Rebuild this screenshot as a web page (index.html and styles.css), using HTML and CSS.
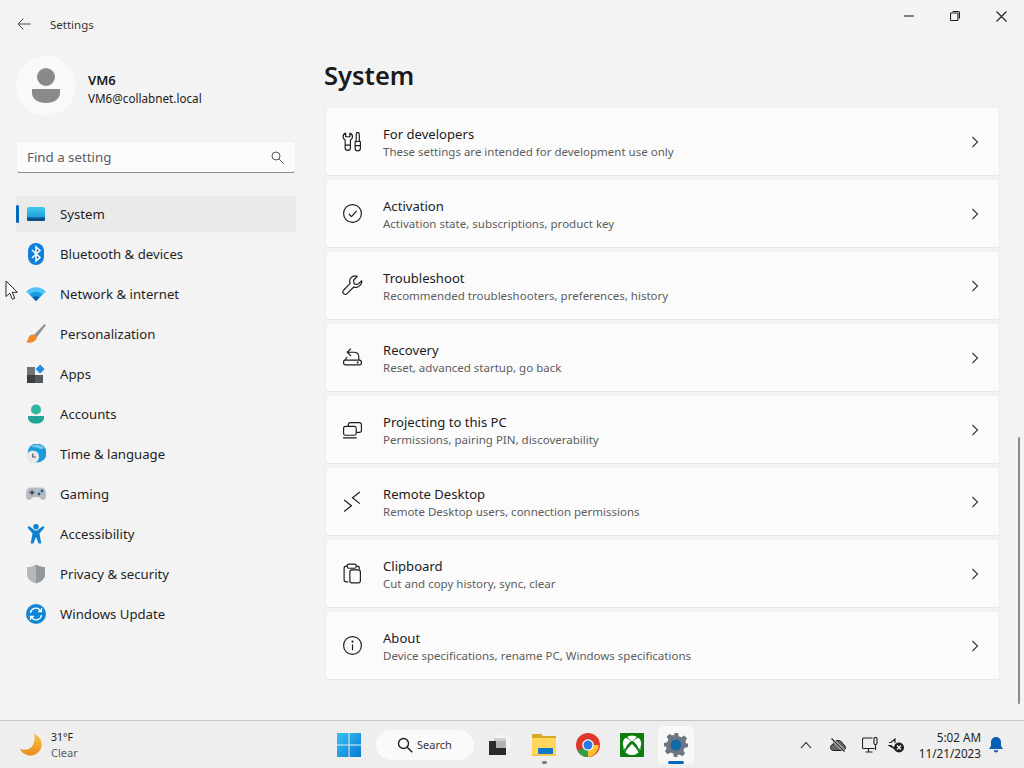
FILE: index.html
```html
<!DOCTYPE html>
<html lang="en">
<head>
<meta charset="utf-8">
<title>Settings</title>
<link rel="stylesheet" href="styles.css">
</head>
<body>
<div class="window">
  <aside class="sidebar">
    <div class="titlebar">
      <svg class="back" width="16" height="16" viewBox="0 0 16 16"><path class="back-line" d="M14.500 8H2M7.500 2.500 2 8l5.500 5.500"/></svg>
      <span class="app-title">Settings</span>
    </div>
    <div class="user">
      <div class="avatar">
        <svg width="30" height="36" viewBox="0 0 30 36"><circle cx="15" cy="9" r="9" fill="#8a8a8a"/><path d="M1 21h28v4c0 6-6 10-14 10S1 31 1 25z" fill="#8a8a8a"/></svg>
      </div>
      <div class="user-text">
        <div class="user-name">VM6</div>
        <div class="user-mail">VM6@collabnet.local</div>
      </div>
    </div>
    <div class="search">
      <span>Find a setting</span>
      <svg width="13" height="13" viewBox="0 0 13 13"><circle class="soft" cx="5" cy="5" r="4"/><path class="soft" d="m8 8 4.500 4.500"/></svg>
    </div>
    <nav class="nav">
      <div class="nav-item active">
        <svg class="nav-icon" viewBox="0 0 20 20"><defs><linearGradient id="sys" x1="0" y1="0" x2="0" y2="1"><stop offset="0" stop-color="#45c8ef"/><stop offset="1" stop-color="#0e93d2"/></linearGradient></defs><rect x="1" y="3" width="18" height="14" rx="1.600" fill="url(#sys)"/><path d="M1 13.500h18v2A1.600 1.600 0 0 1 17.400 17H2.600A1.600 1.600 0 0 1 1 15.500z" fill="#0a4f85"/></svg>
        <span>System</span>
      </div>
      <div class="nav-item">
        <svg class="nav-icon tall" viewBox="0 0 20 24"><rect x="2" y="1" width="16" height="22" rx="8" fill="#0f7fdc"/><path d="m6 8 8 7.500L10 19V5l4 3.500L6 16" fill="none" stroke="#fff" stroke-width="1.500"/></svg>
        <span>Bluetooth &amp; devices</span>
      </div>
      <div class="nav-item">
        <svg class="nav-icon" viewBox="0 0 20 20"><path d="M0 7.500Q10-1 20 7.500L10 17z" fill="#4fc3f7"/><path d="M3.500 10.500Q10 5 16.500 10.500L10 17z" fill="#1a9be0"/><path d="M6.500 13.500Q10 10.500 13.500 13.500L10 17z" fill="#0b5ea8"/></svg>
        <span>Network &amp; internet</span>
      </div>
      <div class="nav-item">
        <svg class="nav-icon" viewBox="0 0 20 20"><path d="M18.500 0 20 1 11 13 8 11z" fill="#8b8f94"/><path d="M8 10.500c-3-.5-5 1-5.500 3.500-.4 2-1.200 3-2.500 4 4 1.500 10 .5 11-5z" fill="#ef8a26"/></svg>
        <span>Personalization</span>
      </div>
      <div class="nav-item">
        <svg class="nav-icon" viewBox="0 0 20 20"><rect x="1" y="3" width="8" height="8" fill="#6f7276"/><rect x="1" y="11" width="8" height="8" fill="#3c3f43"/><rect x="9" y="11" width="8" height="8" fill="#55585c"/><rect x="10.800" y="1.800" width="6.600" height="6.600" rx="1" transform="rotate(45 14.100 5.100)" fill="#1f8fe3"/></svg>
        <span>Apps</span>
      </div>
      <div class="nav-item">
        <svg class="nav-icon" viewBox="0 0 20 20"><circle cx="10" cy="5.500" r="5" fill="#2fb5a0"/><path d="M2 12h16v2c0 3.500-3.500 5.500-8 5.500S2 17.500 2 14z" fill="#22a594"/></svg>
        <span>Accounts</span>
      </div>
      <div class="nav-item">
        <svg class="nav-icon" viewBox="0 0 20 20"><circle cx="11" cy="9" r="9.500" fill="#1c9bd8"/><path d="M5 2.500C9 0 15 0 18 4c-2 1.500-4 1-6 0S7 4 5 2.500z" fill="#78cbe8"/><circle cx="6.800" cy="12.800" r="6.300" fill="#e6e8ec"/><path d="M6.800 9.500v3.500h3" fill="none" stroke="#505356" stroke-width="1.200"/></svg>
        <span>Time &amp; language</span>
      </div>
      <div class="nav-item">
        <svg class="nav-icon" viewBox="0 0 20 20"><path d="M4.500 3.500h11c3 0 4.500 3 4.500 7s-1 5.500-3 5.500-3-3-5-3H8c-2 0-3 3-5 3s-3-1.500-3-5.500 1.500-7 4.500-7z" fill="#b6bbc2"/><path d="M3.500 8.500h5M6 6v5" stroke="#3d4146" stroke-width="1.300"/><circle cx="13" cy="10" r="1.400" fill="#1763a8"/><circle cx="16" cy="7" r="1.400" fill="#1763a8"/></svg>
        <span>Gaming</span>
      </div>
      <div class="nav-item">
        <svg class="nav-icon" viewBox="0 0 20 20"><circle cx="10" cy="2.800" r="2.700" fill="#0f80d2"/><path d="M1.500 3.500 3 2l6 4.500h2L17 2l1.500 1.500-5 6 1.800 10h-2.700L10 13l-2.600 6.500H4.700l1.800-10z" fill="#0f80d2"/></svg>
        <span>Accessibility</span>
      </div>
      <div class="nav-item">
        <svg class="nav-icon" viewBox="0 0 20 20"><path d="M10 .5c3 2 6 2.500 9 2.500v7c0 5-4 8-9 9.500C5 18 1 15 1 10V3c3 0 6-.5 9-2.500z" fill="#b4b8bb"/><path d="M10 .5c3 2 6 2.500 9 2.500v7c0 5-4 8-9 9.500z" fill="#94989c"/></svg>
        <span>Privacy &amp; security</span>
      </div>
      <div class="nav-item">
        <svg class="nav-icon" viewBox="0 0 20 20"><circle cx="10" cy="10" r="10" fill="#0f86d6"/><path d="M4.500 9A5.500 5.500 0 0 1 14 6l1.500 1.500M15.500 4v3.500H12M15.500 11A5.500 5.500 0 0 1 6 14l-1.500-1.500M4.500 16v-3.500H8" fill="none" stroke="#fff" stroke-width="1.300"/></svg>
        <span>Windows Update</span>
      </div>
    </nav>
  </aside>
  <main class="main">
    <div class="controls">
      <div class="ctl"><svg width="10" height="10" viewBox="0 0 10 10"><path class="thin" d="M0 5h10"/></svg></div>
      <div class="ctl"><svg width="10" height="10" viewBox="0 0 10 10"><rect class="thin" x=".5" y="2" width="7.500" height="7.500" rx="1"/><path class="thin" d="M2.500.5h5.500a1.500 1.500 0 0 1 1.500 1.500v5.500"/></svg></div>
      <div class="ctl"><svg width="11" height="11" viewBox="0 0 11 11"><path class="thin" d="m.5.5 10 10M10.500.5l-10 10"/></svg></div>
    </div>
    <h1 class="heading">System</h1>
    <div class="cards">
      <div class="card">
        <svg class="card-icon" viewBox="0 0 20 20"><path class="line" d="M3.500 2C2 2.500 1 4 1 5.500c0 1.500 1 2.500 2 3V16a2.500 2.500 0 0 0 5 0V8.500c1-.5 2-1.500 2-3C10 4 9 2.500 7.500 2v3.500h-4zM3 13.500h5"/><path class="line" d="M14 1.500h2l.5 2.500v6h-3V4zM12.500 10h5v6.500a2.500 2.500 0 0 1-5 0zM12.500 14h5"/></svg>
        <div class="card-text"><div class="card-title">For developers</div><div class="card-sub">These settings are intended for development use only</div></div>
        <svg class="chev" viewBox="0 0 12 12"><path class="chev-line" d="m3.500 1 5 5-5 5"/></svg>
      </div>
      <div class="card">
        <svg class="card-icon" viewBox="0 0 20 20"><circle class="line" cx="10" cy="10" r="8.500"/><path class="line" d="m6.500 10.500 2.500 2.500 5-5.500"/></svg>
        <div class="card-text"><div class="card-title">Activation</div><div class="card-sub">Activation state, subscriptions, product key</div></div>
        <svg class="chev" viewBox="0 0 12 12"><path class="chev-line" d="m3.500 1 5 5-5 5"/></svg>
      </div>
      <div class="card">
        <svg class="card-icon" viewBox="0 0 20 20"><path class="line" d="M18.800 5.500 15 9l-3.500-.5L11 5l3.500-3.800C12.500.5 10 1 8.700 2.500 7.300 4 7 6 7.800 8L1.500 14.500c-.8 1-.8 2.500 0 3.200 1 1 2.400 1 3.300 0L11.200 11.400c2 .8 4 .5 5.500-1 1.500-1.400 2.500-3 2.100-4.900z"/></svg>
        <div class="card-text"><div class="card-title">Troubleshoot</div><div class="card-sub">Recommended troubleshooters, preferences, history</div></div>
        <svg class="chev" viewBox="0 0 12 12"><path class="chev-line" d="m3.500 1 5 5-5 5"/></svg>
      </div>
      <div class="card">
        <svg class="card-icon" viewBox="0 0 20 20"><path class="line" d="M6 5h6a4.500 4.500 0 0 1 4 4.500V12M8.500 1.500 5 5l3.500 3.500M5 9.500c-1 .5-1.500 2-2 3M2.500 12.500h14a2 2 0 0 1 2 2v.5a2 2 0 0 1-2 2h-13a2 2 0 0 1-2-2v-.5a2 2 0 0 1 1-2z"/><circle cx="15" cy="14.800" r=".9" fill="#1b1b1b"/></svg>
        <div class="card-text"><div class="card-title">Recovery</div><div class="card-sub">Reset, advanced startup, go back</div></div>
        <svg class="chev" viewBox="0 0 12 12"><path class="chev-line" d="m3.500 1 5 5-5 5"/></svg>
      </div>
      <div class="card">
        <svg class="card-icon" viewBox="0 0 20 20"><rect class="line" x="1.500" y="7" width="12" height="8.500" rx="1.800"/><path class="line" d="M6 7V5.500A1.800 1.800 0 0 1 7.800 3.500h8.900A1.800 1.800 0 0 1 18.500 5.500v5.500a1.800 1.800 0 0 1-1.800 1.800h-3.200M1 18h13"/></svg>
        <div class="card-text"><div class="card-title">Projecting to this PC</div><div class="card-sub">Permissions, pairing PIN, discoverability</div></div>
        <svg class="chev" viewBox="0 0 12 12"><path class="chev-line" d="m3.500 1 5 5-5 5"/></svg>
      </div>
      <div class="card">
        <svg class="card-icon" viewBox="0 0 20 20"><path class="line" d="m2 8.500 7 5.500-7 5.500M17 1l-7 5.500 7 5.500"/></svg>
        <div class="card-text"><div class="card-title">Remote Desktop</div><div class="card-sub">Remote Desktop users, connection permissions</div></div>
        <svg class="chev" viewBox="0 0 12 12"><path class="chev-line" d="m3.500 1 5 5-5 5"/></svg>
      </div>
      <div class="card">
        <svg class="card-icon" viewBox="0 0 20 20"><path class="line" d="M5 3H4a2 2 0 0 0-2 2v11a2 2 0 0 0 2 2h2M13.500 3h1a2 2 0 0 1 2 2v1"/><rect class="line" x="5" y="1" width="8.500" height="4" rx="1.500"/><rect class="line" x="7.500" y="6.500" width="10" height="12.500" rx="2"/></svg>
        <div class="card-text"><div class="card-title">Clipboard</div><div class="card-sub">Cut and copy history, sync, clear</div></div>
        <svg class="chev" viewBox="0 0 12 12"><path class="chev-line" d="m3.500 1 5 5-5 5"/></svg>
      </div>
      <div class="card">
        <svg class="card-icon" viewBox="0 0 20 20"><circle class="line" cx="10" cy="10" r="8.500"/><path class="line" d="M10 9v5.500"/><circle cx="10" cy="6.300" r="1" fill="#1b1b1b"/></svg>
        <div class="card-text"><div class="card-title">About</div><div class="card-sub">Device specifications, rename PC, Windows specifications</div></div>
        <svg class="chev" viewBox="0 0 12 12"><path class="chev-line" d="m3.500 1 5 5-5 5"/></svg>
      </div>
    </div>
  </main>
  <div class="scrollbar"></div>
  <svg class="cursor" width="14" height="21" viewBox="0 0 14 21"><path d="M1 1v15.500l3.800-3.300 2.600 6 2.400-1-2.600-5.900h5.200z" fill="#fff" stroke="#222" stroke-width="1"/></svg>
</div>
<footer class="taskbar">
  <div class="weather">
    <svg width="24" height="24" viewBox="0 0 24 24"><defs><linearGradient id="moon" x1="0" y1="0" x2="0" y2="1"><stop offset="0" stop-color="#f5c242"/><stop offset="1" stop-color="#ec8a1e"/></linearGradient></defs><path d="M15 1c6 2 9 8 7 14-2 6-9 9-14 7-3-1-6-3-7-6 6 2 11 0 13-4 2-4 2-8 1-11z" fill="url(#moon)"/></svg>
    <div class="weather-text"><div class="temp">31°F</div><div class="cond">Clear</div></div>
  </div>
  <div class="center">
    <div class="tile win">
      <svg width="24" height="24" viewBox="0 0 24 24"><defs><linearGradient id="win" x1="0" y1="0" x2="1" y2="1"><stop offset="0" stop-color="#35c3f2"/><stop offset="1" stop-color="#0b78d4"/></linearGradient></defs><path d="M0 0h11.500v11.500H0zM12.500 0H24v11.500H12.500zM0 12.500h11.500V24H0zM12.500 12.500H24V24H12.500z" fill="url(#win)"/></svg>
    </div>
    <div class="pill">
      <svg width="16" height="16" viewBox="0 0 16 16"><circle cx="6.500" cy="6.500" r="5" fill="none" stroke="#1f1f1f" stroke-width="1.400"/><path d="m10.200 10.200 5 5" stroke="#1f1f1f" stroke-width="1.500"/></svg>
      <span>Search</span>
    </div>
    <div class="tile task">
      <svg width="24" height="22" viewBox="0 0 24 22"><rect x="9" y="1" width="14" height="14" fill="#f4f4f4"/><rect x="7" y="4" width="12" height="12" fill="#d0d0d0"/><rect x="2" y="7" width="17" height="14" fill="#2b2b2b"/><rect x="9" y="7" width="10" height="7" fill="#b3b3b3"/></svg>
    </div>
    <div class="tile">
      <svg width="24" height="24" viewBox="0 0 24 24"><path d="M0 1h9l2 2h13v4H0z" fill="#d9a825"/><path d="M0 5h24v18H0z" fill="#ffd75e"/><rect x="6" y="15" width="15" height="6" rx="1" fill="#0f78c8"/><rect x="0" y="21" width="24" height="2" fill="#f5c94c"/></svg>
      <span class="dot"></span>
    </div>
    <div class="tile">
      <svg width="24" height="24" viewBox="0 0 24 24"><circle cx="12" cy="12" r="12" fill="#e0372b"/><path d="M12 12 1.600 18a12 12 0 0 0 10.400 6l6-10z" fill="#2f9e44"/><path d="M12 12h10.800A12 12 0 0 1 12 24z" fill="#fbc02d"/><circle cx="12" cy="12" r="5.800" fill="#fff"/><circle cx="12" cy="12" r="4.500" fill="#2a78e4"/></svg>
    </div>
    <div class="tile">
      <svg width="24" height="24" viewBox="0 0 24 24"><rect width="24" height="24" rx="1" fill="#107c10"/><circle cx="12" cy="12" r="9.500" fill="#fff"/><path d="M5 2 12 8.500 19 2l3 10-3.500 8L12 13.500 5.500 20 2 12z" fill="#107c10"/><path d="M12 11c2 2 6 6 6.500 8.500a9.500 9.500 0 0 1-13 0C6 17 10 13 12 11zM5 5c2 0 4 1 6 3-3 2.500-5 5.500-6 8.500A9.500 9.500 0 0 1 5 5zM19 5c-2 0-4 1-6 3 3 2.500 5 5.500 6 8.500A9.500 9.500 0 0 0 19 5z" fill="#fff"/></svg>
    </div>
    <div class="tile current">
      <svg width="24" height="24" viewBox="0 0 24 24"><path d="M10 0h4l.8 3.200 2.700 1.100 2.800-1.700 2.800 2.800-1.700 2.800 1.100 2.700L24 10v4l-3.500.9-1.100 2.700 1.700 2.800-2.800 2.800-2.800-1.700-2.700 1.100L14 24h-4l-.8-3.400-2.700-1.100-2.800 1.700-2.800-2.800 1.700-2.800-1.100-2.700L0 14v-4l3.200-.8 1.100-2.700-1.700-2.800 2.800-2.800 2.800 1.700 2.700-1.100z" fill="#6d7681"/><circle cx="12" cy="12" r="5.500" fill="#1568a8"/></svg>
      <span class="indicator"></span>
    </div>
  </div>
  <div class="tray">
    <svg class="t-chev" width="12" height="8" viewBox="0 0 12 8"><path class="thin" d="m1 7 5-5.500L11 7"/></svg>
    <svg class="t-cloud" width="16" height="14" viewBox="0 0 16 14"><path d="M3.500 12.500C1.500 12.500.5 11 .5 9.500S1.500 6.500 3 6.500C3.500 4 5.500 2.500 8 2.500s4.500 1.500 5 4c1.500 0 2.500 1.500 2.500 3s-1 3-3 3z" fill="#666" stroke="#1b1b1b"/><path d="m2 1 12 12" stroke="#eee" stroke-width="2.500"/><path d="m1.500 .5 13 13" stroke="#1b1b1b" stroke-width="1.100"/></svg>
    <svg class="t-net" width="16" height="16" viewBox="0 0 16 16"><path class="thin" d="M10.500 1H1.500a1 1 0 0 0-1 1v8.500a1 1 0 0 0 1 1h11M6.500 11.500V15M3.500 15h7"/><rect class="thin" x="12" y=".5" width="3" height="7" rx="1.200"/><path class="thin" d="M13.500 8v5"/></svg>
    <svg class="t-spk" width="16" height="16" viewBox="0 0 16 16"><path class="thin" d="M1 5.500h2L7 2v4M7 12 3 8.500H1z"/><circle cx="11" cy="10.500" r="5" fill="#1f1f1f"/><path d="m9 8.500 4 4m0-4-4 4" stroke="#fff" stroke-width="1.200"/></svg>
    <div class="clock"><div>5:02 AM</div><div>11/21/2023</div></div>
    <svg class="bell" width="16" height="16" viewBox="0 0 16 16"><path d="M8 0c3 0 5 2.300 5 5.300v3.500L15 12H1l2-3.200V5.300C3 2.300 5 0 8 0zM5.800 13.200h4.400a2.200 2.200 0 0 1-4.400 0z" fill="#0a5fb4"/></svg>
  </div>
</footer>
</body>
</html>
```
FILE: styles.css
```css
* { box-sizing: border-box; }
html, body { margin: 0; padding: 0; }
body {
  width: 1024px;
  height: 768px;
  overflow: hidden;
  display: flex;
  flex-direction: column;
  background: #f3f3f3;
  font-family: "Noto Sans", "Open Sans", sans-serif;
  color: #1b1b1b;
}
svg { display: block; flex: none; }
.line { fill: none; stroke: #1b1b1b; stroke-width: 1.100; stroke-linejoin: round; }
.thin { fill: none; stroke: #1f1f1f; stroke-width: 1.100; }
.soft { fill: none; stroke: #5a5a5a; stroke-width: 1; }
.back-line { fill: none; stroke: #4a4a4a; stroke-width: 1; }

.window { position: relative; flex: 1; display: flex; min-height: 0; }
.sidebar { width: 325px; flex: none; padding-left: 16px; }
.titlebar { display: flex; align-items: center; height: 48px; }
.app-title { margin-left: 18px; font-size: 11.500px; color: #333; }
.user { display: flex; align-items: center; height: 60px; margin-top: 8px; gap: 12px; }
.avatar {
  width: 60px; height: 60px; border-radius: 50%;
  background: #f9f9f9;
  display: flex; align-items: center; justify-content: center;
}
.user-text { padding-top: 6px; }
.user-name { font-size: 13px; font-weight: 600; line-height: 18px; }
.user-mail { font-size: 11.700px; line-height: 18px; }
.search {
  width: 280px; height: 32px; margin-top: 25px;
  display: flex; align-items: center; justify-content: space-between;
  padding: 0 11px 0 10px;
  background: #fbfbfb;
  border: 1px solid #efefef;
  border-bottom-color: #8c8c8c;
  border-radius: 4px;
  font-size: 13.300px;
  color: #5d5d5d;
}
.nav { margin-top: 23px; width: 280px; display: flex; flex-direction: column; gap: 4px; }
.nav-item {
  position: relative;
  height: 36px;
  display: flex; align-items: center; gap: 14px;
  padding-left: 10px;
  border-radius: 4px;
  font-size: 13.200px;
  color: #1f1f1f;
}
.nav-item.active { background: #eaeaea; }
.nav-item.active::before {
  content: "";
  position: absolute; left: 0; top: 9px;
  width: 3px; height: 18px; border-radius: 2px;
  background: #0067c0;
}
.nav-icon { width: 20px; height: 20px; }
.nav-icon.tall { height: 24px; }

.main { flex: 1; min-width: 0; padding-right: 24px; }
.controls { display: flex; justify-content: flex-end; height: 32px; margin-right: -24px; }
.ctl { width: 46px; height: 32px; display: flex; align-items: center; justify-content: center; }
.heading { margin: 0 0 0 -1px; height: 75px; font-size: 25.500px; line-height: 86px; font-weight: 600; }
.cards { display: flex; flex-direction: column; gap: 4px; }
.card {
  height: 69px;
  margin-bottom: -1px;
  display: flex; align-items: center;
  padding: 0 18px 0 16px;
  background: #fbfbfb;
  border: 1px solid #eeeeee;
  border-bottom-color: #e6e6e6;
  border-radius: 4px;
}
.card-icon { width: 21px; height: 21px; }
.card-text { flex: 1; margin-left: 20px; padding-top: 3px; }
.card-title { font-size: 13.100px; line-height: 18px; color: #1b1b1b; }
.card-sub { font-size: 11.500px; line-height: 18px; color: #5d5d5d; }
.chev { width: 12px; height: 12px; }
.chev-line { fill: none; stroke: #3a3a3a; stroke-width: 1.200; }

.scrollbar {
  position: absolute; right: 4px; top: 437px;
  width: 2px; height: 267px; border-radius: 1px;
  background: #8a8a8a;
}
.cursor { position: absolute; left: 5px; top: 280px; }

.taskbar {
  height: 48px; flex: none;
  display: grid;
  grid-template-columns: 331px auto 1fr;
  align-items: center;
  background: #eeeeee;
  border-top: 1px solid #c6c6c6;
  font-size: 11px;
}
.weather { display: flex; align-items: center; padding-left: 19px; gap: 8px; }
.weather-text { line-height: 16px; }
.temp { font-size: 10.500px; }
.cond { color: #5d5d5d; }
.center { display: flex; align-items: center; gap: 8px; }
.tile {
  position: relative;
  width: 36px; height: 38px;
  display: flex; align-items: center; justify-content: center;
  border-radius: 4px;
}
.tile.win { margin-right: 1px; }
.tile.task svg { margin-left: -2px; }
.tile.current { background: #f8f8f8; }
.pill {
  width: 98px; height: 30px;
  display: flex; align-items: center; gap: 4px;
  padding-left: 21px;
  background: #fafafa;
  border-radius: 15px;
  font-size: 11px;
  color: #333;
}
.dot {
  position: absolute; left: 16px; bottom: 0;
  width: 5px; height: 3px; border-radius: 2px;
  background: #7a7a7a;
}
.indicator {
  position: absolute; left: 10px; bottom: 0;
  width: 16px; height: 3px; border-radius: 2px;
  background: #0067c0;
}
.tray { display: flex; align-items: center; padding-right: 20px; }
.t-chev { margin-left: 106px; }
.t-cloud { margin-left: 18px; }
.t-net { margin-left: 16px; }
.t-spk { margin-left: 10px; }
.clock { margin-left: auto; margin-right: 7px; text-align: right; line-height: 16px; font-size: 11.700px; color: #1f1f1f; }
```
